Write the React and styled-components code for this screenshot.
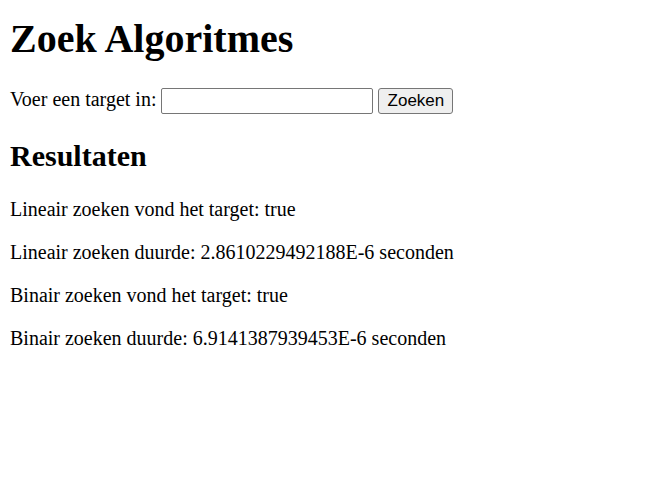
import styled, { createGlobalStyle } from "styled-components"

const Global = createGlobalStyle`
    html, body {
        margin: 0;
        background: #ffffff;
    }
    body {
        padding: 0 10px;
        font-family: "Liberation Serif", "Times New Roman", serif;
        font-size: 20px;
        color: #000000;
    }
`;

const Title = styled.h1`
    font-size: 40px;
    font-weight: bold;
    margin: 14.5px 0 26.8px;
`;

const SearchForm = styled.form`
    margin: 0;
    display: block;
`;

const TargetInput = styled.input`
    box-sizing: border-box;
    width: 212px;
    height: 26px;
    margin: 0;
    padding: 1px 3px;
    border: 1px solid #767676;
    border-radius: 2px;
    font-family: "Liberation Sans", Arial, sans-serif;
    font-size: 16.67px;
    vertical-align: baseline;
`;

const SearchButton = styled.button`
    box-sizing: border-box;
    width: 75px;
    height: 26px;
    margin: 0;
    padding: 1px 0;
    border: 1px solid #767676;
    border-radius: 3px;
    background: #efefef;
    color: #000000;
    font-family: "Liberation Sans", Arial, sans-serif;
    font-size: 17px;
`;

const SubTitle = styled.h2`
    font-size: 30px;
    font-weight: bold;
    margin: 24.9px 0;
`;

const Result = styled.p`
    margin: 20px 0;
`;

export default function App() {
    const results = [
        "Lineair zoeken vond het target: true",
        "Lineair zoeken duurde: 2.8610229492188E-6 seconden",
        "Binair zoeken vond het target: true",
        "Binair zoeken duurde: 6.9141387939453E-6 seconden",
    ]

    return (
        <>
            <Global />
            <Title>Zoek Algoritmes</Title>
            <SearchForm onSubmit={(e) => e.preventDefault()}>
                Voer een target in: <TargetInput type="text" /> <SearchButton type="submit">Zoeken</SearchButton>
            </SearchForm>
            <SubTitle>Resultaten</SubTitle>
            {results.map((line) => (
                <Result key={line}>{line}</Result>
            ))}
        </>
    )
}
